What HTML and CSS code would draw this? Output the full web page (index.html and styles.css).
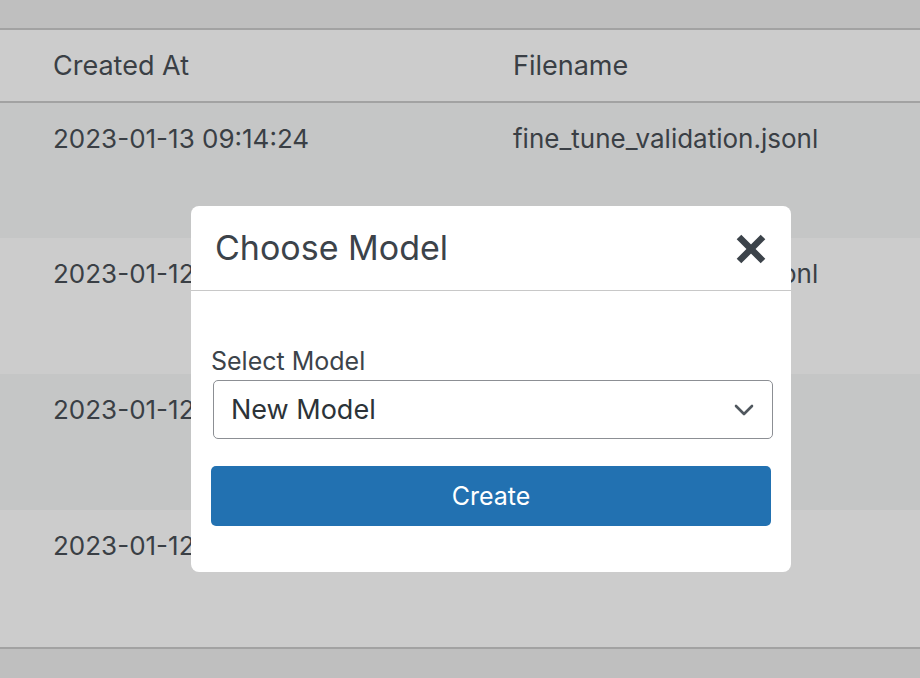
FILE: index.html
```html
<!DOCTYPE html>
<html lang="en">
<head>
<meta charset="utf-8">
<title>Choose Model</title>
<link rel="stylesheet" href="styles.css">
</head>
<body>
<div class="page">
  <div class="topbar"></div>
  <table class="list">
    <thead>
      <tr><th class="col-date">Created At</th><th>Filename</th></tr>
    </thead>
    <tbody>
      <tr class="odd"><td class="col-date">2023-01-13 09:14:24</td><td>fine_tune_validation.jsonl</td></tr>
      <tr><td class="col-date">2023-01-12 17:42:08</td><td>fine_tune_validation.jsonl</td></tr>
      <tr class="odd"><td class="col-date">2023-01-12 15:03:51</td><td>training_data.jsonl</td></tr>
      <tr class="last"><td class="col-date">2023-01-12 11:27:36</td><td>prompts.jsonl</td></tr>
    </tbody>
  </table>
</div>

<div class="modal" role="dialog" aria-labelledby="modal-title">
  <div class="modal-header">
    <h2 id="modal-title" class="modal-title">Choose Model</h2>
    <button class="modal-close" aria-label="Close">
      <svg width="32" height="32" viewBox="0 0 32 32" aria-hidden="true">
        <path d="M4 4 L28 28 M28 4 L4 28" stroke="currentColor" stroke-width="6.5" stroke-linecap="butt" fill="none"/>
      </svg>
    </button>
  </div>
  <div class="modal-body">
    <label class="field-label" for="model">Select Model</label>
    <div class="select-wrap">
      <select id="model" class="select">
        <option>New Model</option>
      </select>
      <svg class="chevron" width="20" height="12" viewBox="0 0 20 12" aria-hidden="true">
        <path d="M2 2 L10 10 L18 2" stroke="currentColor" stroke-width="2.6" fill="none" stroke-linecap="round" stroke-linejoin="round"/>
      </svg>
    </div>
    <button class="btn-primary">Create</button>
  </div>
</div>
</body>
</html>
```

FILE: styles.css
```css
html, body {
  margin: 0;
  padding: 0;
}
body {
  background: #bfbfbf;
  font-family: Inter, "Noto Sans", "Liberation Sans", sans-serif;
  color: #3a3f45;
  width: 920px;
  height: 678px;
  overflow: hidden;
  position: relative;
}
.topbar {
  height: 28px;
  background: #bfbfbf;
}
.list {
  width: 100%;
  border-collapse: collapse;
  border-top: 2px solid #a2a2a2;
  border-bottom: 2px solid #a2a2a2;
}
.list th {
  height: 71px;
  padding: 0;
  text-align: left;
  font-weight: 400;
  font-size: 27px;
  background: #cccccc;
  border-bottom: 2px solid #a2a2a2;
  vertical-align: middle;
}
.list td {
  height: 136px;
  box-sizing: border-box;
  padding: 20px 0 0 0;
  font-size: 26px;
  line-height: 32px;
  vertical-align: top;
  background: #cccccc;
}
.list tr.odd td {
  background: #c5c6c6;
}
.list tr.last td {
  height: 138px;
}
.list .col-date {
  width: 513px;
  padding-left: 53px;
  box-sizing: border-box;
}

.modal {
  position: absolute;
  left: 191px;
  top: 206px;
  width: 600px;
  height: 366px;
  background: #ffffff;
  border-radius: 8px;
  box-sizing: border-box;
  color: #3c434a;
}
.modal-header {
  height: 84px;
  border-bottom: 1px solid #c8c8c8;
  display: flex;
  align-items: center;
  justify-content: space-between;
  padding: 0 24px 0 24px;
}
.modal-title {
  margin: 0;
  font-size: 34px;
  font-weight: 400;
  line-height: 40px;
  padding-top: 0;
}
.modal-close {
  border: 0;
  background: none;
  padding: 0;
  width: 32px;
  height: 32px;
  color: #3c434a;
  display: flex;
  margin-top: 2px;
}
.modal-body {
  padding: 54px 20px 0 20px;
  display: flex;
  flex-direction: column;
}
.field-label {
  font-size: 25px;
  line-height: 32px;
  margin-left: 0;
  margin-bottom: 3px;
}
.select-wrap {
  position: relative;
  margin: 0 -2px 0 2px;
}
.select {
  appearance: none;
  -webkit-appearance: none;
  width: 100%;
  height: 59px;
  box-sizing: border-box;
  border: 1.5px solid #8c8f94;
  border-radius: 5px;
  background: #ffffff;
  font-family: inherit;
  font-size: 27px;
  color: #2c3338;
  padding: 0 50px 0 17px;
}
.chevron {
  position: absolute;
  right: 19px;
  top: 24px;
  color: #50575e;
  pointer-events: none;
}
.btn-primary {
  margin-top: 27px;
  width: 560px;
  height: 60px;
  border: 0;
  border-radius: 5px;
  background: #2271b1;
  color: #ffffff;
  font-family: inherit;
  font-size: 25px;
}
```
